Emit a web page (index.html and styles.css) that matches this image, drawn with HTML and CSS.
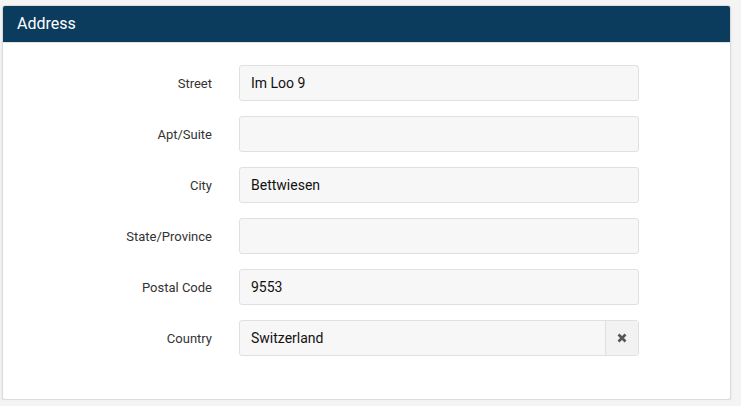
FILE: index.html
```html
<!DOCTYPE html>
<html lang="en">
<head>
    <meta charset="UTF-8">
    <title>Address</title>
    <link rel="stylesheet" href="styles.css">
</head>
<body>
    <div class="panel">
        <div class="panel-head">Address</div>
        <div class="panel-body">
            <label class="lbl" for="f1">Street</label>
            <input class="fld" id="f1" type="text" value="Im Loo 9">

            <label class="lbl" for="f2">Apt/Suite</label>
            <input class="fld" id="f2" type="text" value="">

            <label class="lbl" for="f3">City</label>
            <input class="fld" id="f3" type="text" value="Bettwiesen">

            <label class="lbl" for="f4">State/Province</label>
            <input class="fld" id="f4" type="text" value="">

            <label class="lbl" for="f5">Postal Code</label>
            <input class="fld" id="f5" type="text" value="9553">

            <label class="lbl" for="f6">Country</label>
            <div class="select">
                <span class="select-val">Switzerland</span>
                <span class="select-clear">
                    <svg width="10" height="10" viewBox="0 0 10 10">
                        <path d="M1.5 1.5 L8.5 8.5 M8.5 1.5 L1.5 8.5" stroke="#555" stroke-width="2.6" stroke-linecap="butt"/>
                    </svg>
                </span>
            </div>
        </div>
    </div>
</body>
</html>
```

FILE: styles.css
```css
html, body {
  margin: 0;
  padding: 0;
}

body {
  background: #f4f4f4;
  font-family: Roboto, "Liberation Sans", Arial, sans-serif;
  padding: 5px 0 0 2px;
}

.panel {
  width: 727px;
  height: 393px;
  background: #fff;
  border: 1px solid #dcdcdc;
  border-radius: 3px;
  box-shadow: 0 1px 2px rgba(0, 0, 0, .12);
}

.panel-head {
  height: 36px;
  line-height: 35px;
  padding-left: 14px;
  background: #0b3c5d;
  color: #fff;
  font-size: 16px;
  border-bottom: 1px solid #e2e2e2;
  border-radius: 2px 2px 0 0;
}

.panel-body {
  display: grid;
  grid-template-columns: 209px 400px;
  column-gap: 27px;
  row-gap: 15px;
  padding-top: 22px;
}

.lbl {
  font-size: 13px;
  color: #333;
  text-align: right;
  align-self: center;
}

.fld {
  box-sizing: border-box;
  height: 36px;
  margin: 0;
  padding: 0 11px;
  border: 1px solid #e0e0e0;
  border-radius: 3px;
  background: #f7f7f7;
  font-family: inherit;
  font-size: 14px;
  color: #111;
  outline: none;
}

.select {
  box-sizing: border-box;
  height: 36px;
  display: flex;
  border: 1px solid #e0e0e0;
  border-radius: 3px;
  background: #f7f7f7;
}

.select-val {
  flex: 1;
  padding-left: 11px;
  line-height: 34px;
  font-size: 14px;
  color: #111;
}

.select-clear {
  width: 32px;
  display: flex;
  align-items: center;
  justify-content: center;
  border-left: 1px solid #e0e0e0;
  background: #f2f2f2;
}
```
